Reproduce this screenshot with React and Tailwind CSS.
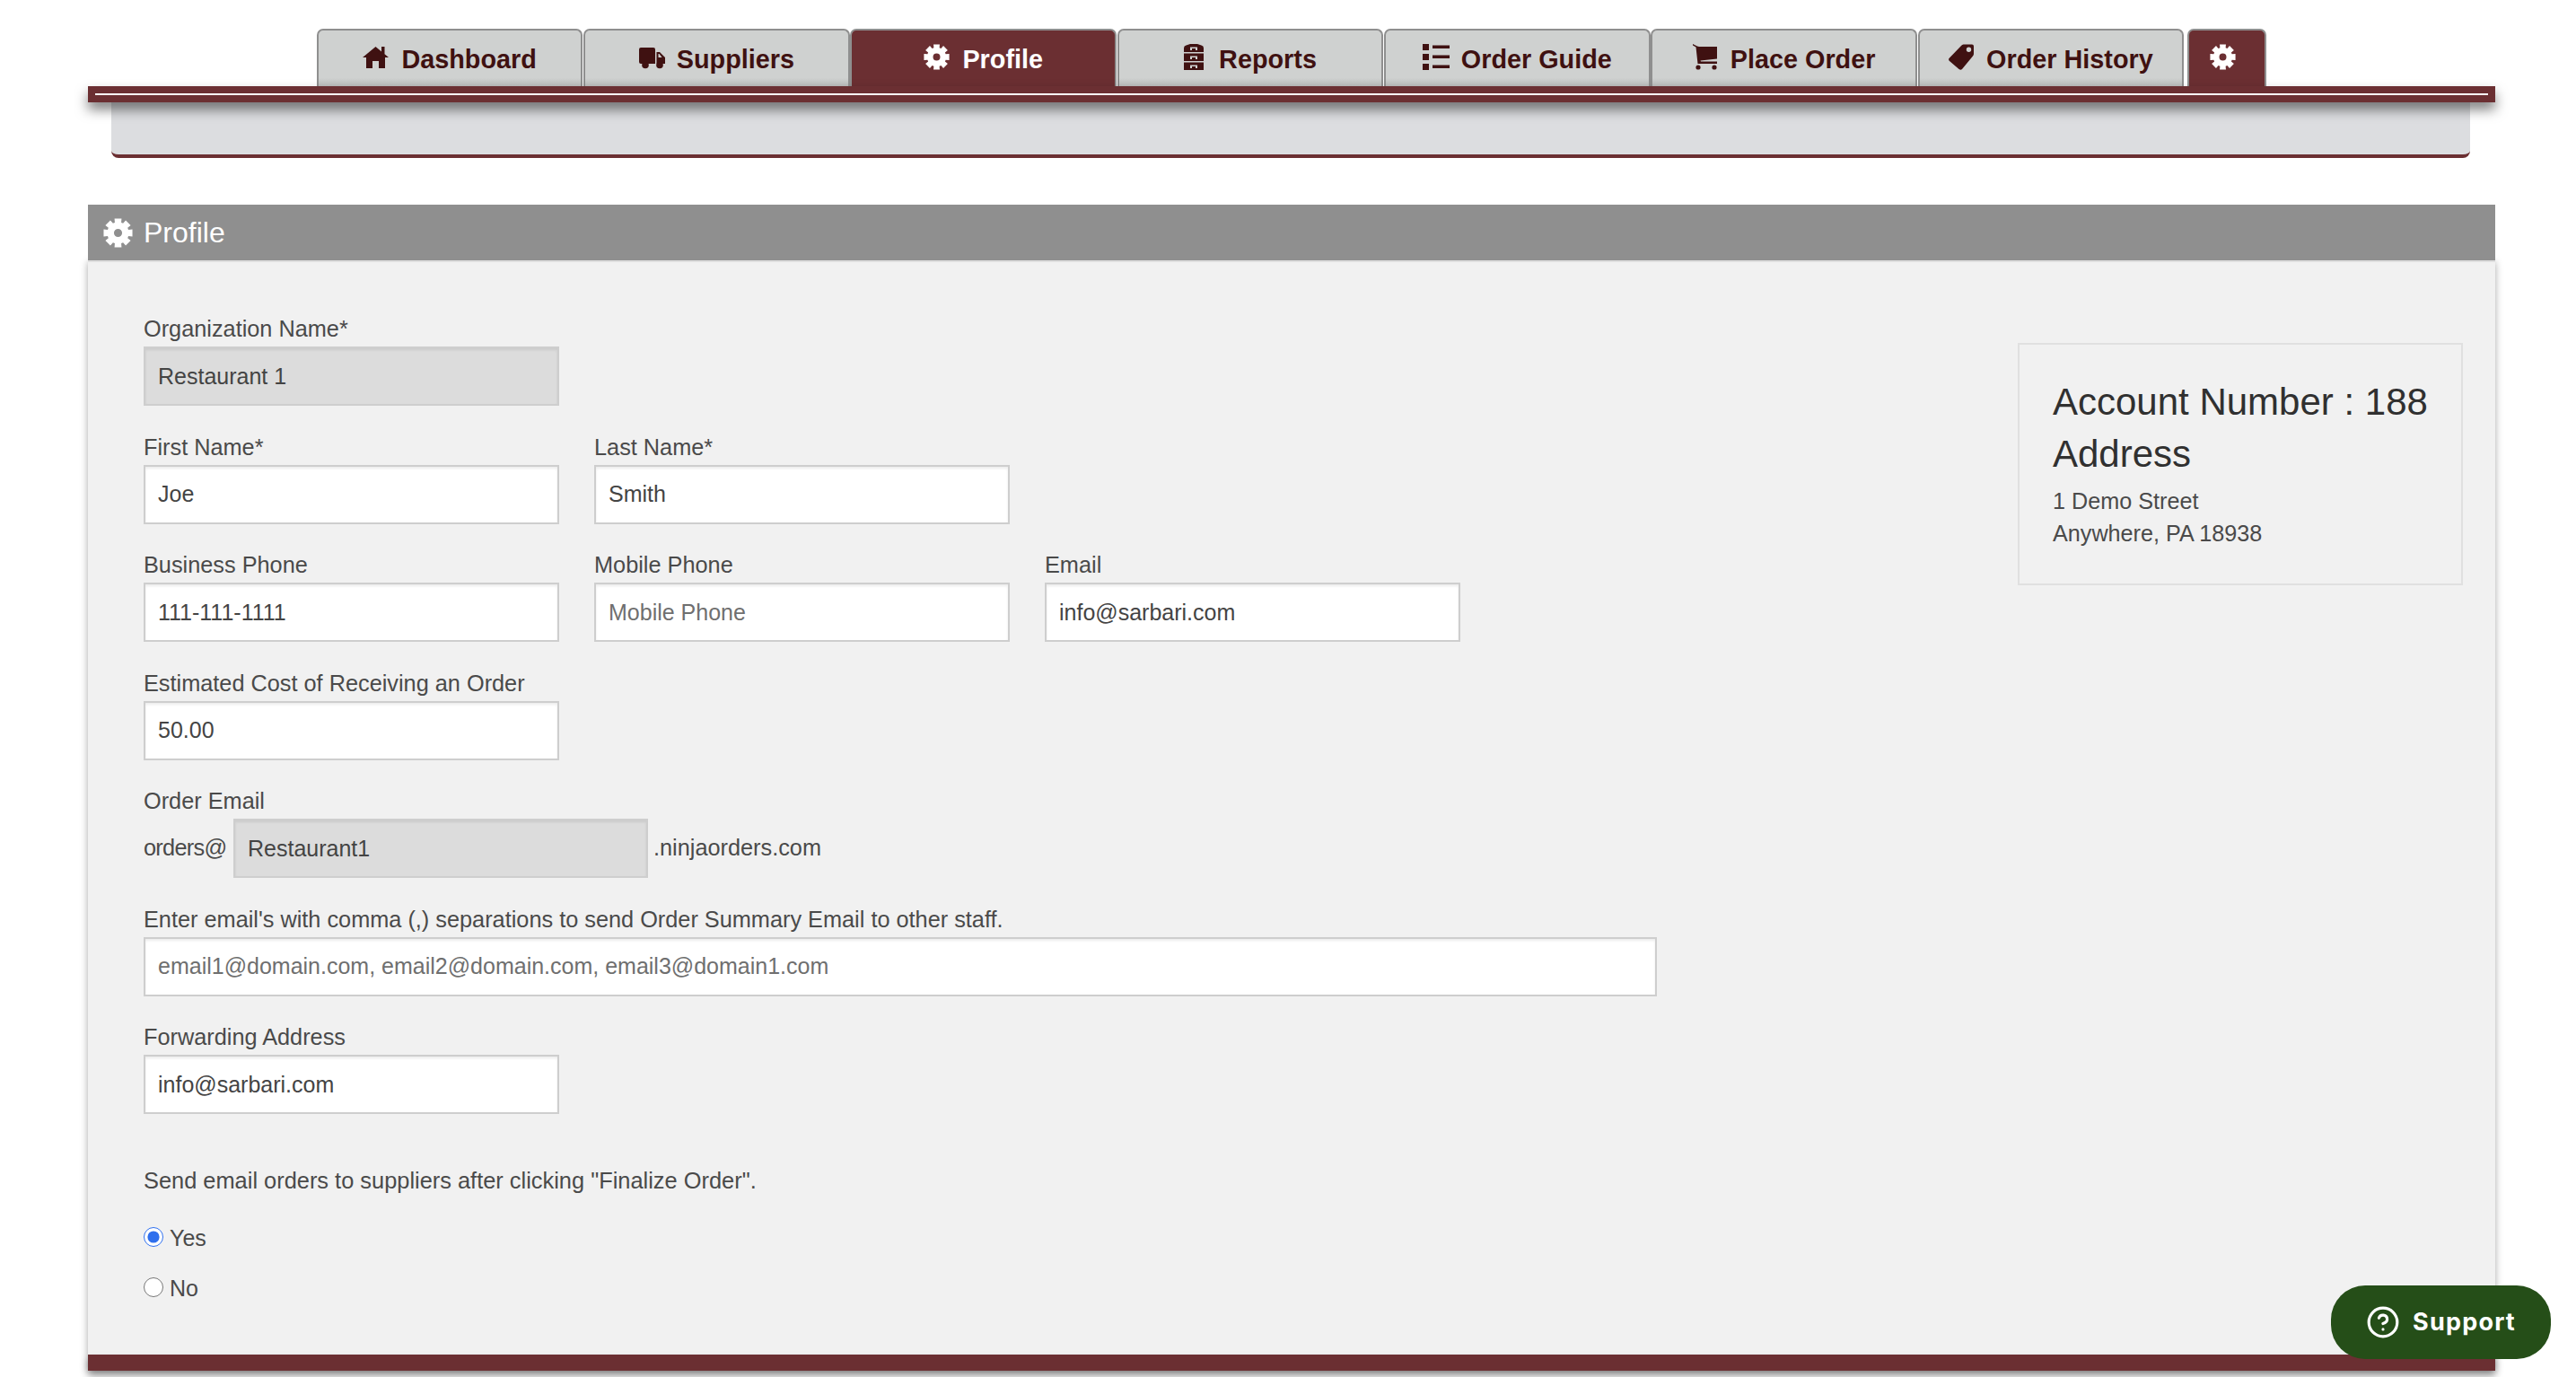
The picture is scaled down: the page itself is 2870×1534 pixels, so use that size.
import React from "react";
import { CircleHelp } from "lucide-react";

const gearPath = (() => {
  const c = 14.5;
  const pts = [];
  for (let i = 0; i < 8; i++) {
    const a = (i * Math.PI) / 4 - Math.PI / 2;
    const seq = [
      [10.6, -0.3],
      [14.5, -0.24],
      [14.5, 0.24],
      [10.6, 0.3],
    ];
    seq.forEach(([r, d]) => {
      pts.push([c + r * Math.cos(a + d), c + r * Math.sin(a + d)]);
    });
  }
  const outer = "M" + pts.map((p) => p[0].toFixed(2) + " " + p[1].toFixed(2)).join("L") + "Z";
  return outer + "M14.5 10.500a4 4 0 1 0 0 8a4 4 0 1 0 0-8Z";
})();

const Gear = ({ className }) => (
  <svg viewBox="0 0 29 29" className={className} fill="currentColor">
    <path fillRule="evenodd" d={gearPath} />
  </svg>
);

const Home = ({ className }) => (
  <svg viewBox="0 0 29 29" className={className} fill="currentColor">
    <path d="M14.5 3L21 8.4V3h3.5v8.3L29 15h-4v12h-7v-8h-7v8H4V15H0Z" />
  </svg>
);

const Truck = ({ className }) => (
  <svg viewBox="0 0 29 29" className={className} fill="currentColor">
    <path fillRule="evenodd" d="M2 4h14a2 2 0 0 1 2 2v16H2a2 2 0 0 1-2-2V6a2 2 0 0 1 2-2ZM19.5 9H23l6 6v7H19.5ZM21.5 11v4h4l-3-4Z" />
    <circle cx="7" cy="23.5" r="3.8" />
    <circle cx="23" cy="23.5" r="3.8" />
  </svg>
);

const Cabinet = ({ className }) => (
  <svg viewBox="0 0 22 29" className={className} fill="currentColor">
    <path fillRule="evenodd" d="M0 9V4.5Q0 2 2.5 1.5L7 0h8l4.500 1.500Q22 2 22 4.500V9ZM7 7h2V5h4v2h2V3.500H7Z" />
    <path fillRule="evenodd" d="M0 10.500h22V19H0ZM7 17h2v-2h4v2h2v-3.500H7Z" />
    <path fillRule="evenodd" d="M0 20.500h22V29H0ZM7 27h2v-2h4v2h2v-3.500H7Z" />
  </svg>
);

const ListIcon = ({ className }) => (
  <svg viewBox="0 0 30 29" className={className} fill="currentColor">
    <rect x="0" y="0" width="7" height="7" />
    <rect x="0" y="11" width="7" height="7" />
    <rect x="0" y="22" width="7" height="7" />
    <rect x="11" y="1.500" width="19" height="3.500" />
    <rect x="11" y="12.500" width="19" height="3.500" />
    <rect x="11" y="23.500" width="19" height="3.500" />
  </svg>
);

const Cart = ({ className }) => (
  <svg viewBox="0 0 27 29" className={className} fill="currentColor">
    <path d="M0 0l5 2.500L7 3h20v13.500L8.500 18.500 9 19.500h18V22H5.500L3.500 3.500 0 1.500Z" />
    <circle cx="6" cy="26" r="2.600" />
    <circle cx="24" cy="26" r="2.600" />
  </svg>
);

const Tag = ({ className }) => (
  <svg viewBox="0 0 28 29" className={className} fill="currentColor">
    <path fillRule="evenodd" d="M16.500 0.500H26a2 2 0 0 1 2 2V11q0 1-1 2.500L15 28q-1.500 1.500-3.500 0L1 19q-1.500-1.500-0.500-3L14 2q1-1.500 2.500-1.500ZM22.500 3.500a2.700 2.700 0 1 0 0 5.400a2.700 2.700 0 1 0 0-5.400Z" />
  </svg>
);

const tabs = [
  { label: "Dashboard", Icon: Home, icon: "w-[29px] h-[29px]", gap: "gap-[14px]" },
  { label: "Suppliers", Icon: Truck, icon: "w-[29px] h-[29px]", gap: "gap-[13px]" },
  { label: "Profile", Icon: Gear, icon: "w-[29px] h-[29px]", gap: "gap-[14px]", active: true },
  { label: "Reports", Icon: Cabinet, icon: "w-[22px] h-[29px]", gap: "gap-[17px]" },
  { label: "Order Guide", Icon: ListIcon, icon: "w-[30px] h-[29px]", gap: "gap-[13px]" },
  { label: "Place Order", Icon: Cart, icon: "w-[27px] h-[29px]", gap: "gap-[15px]" },
  { label: "Order History", Icon: Tag, icon: "w-[28px] h-[29px]", gap: "gap-[14px]" },
];

const inputBase =
  "h-[66px] border-2 border-[#cecece] px-[14px] text-[25px] text-[#444444] outline-none placeholder:text-[#6f6f6f] shadow-[inset_0_2px_3px_rgba(0,0,0,0.08)]";
const inputOn = "bg-white";
const inputOff = "bg-[#dcdcdc]";

const Label = ({ children }) => (
  <div className="h-[36px] text-[25.3px] leading-[32px] text-[#4a4a4a]">{children}</div>
);

const Field = ({ label, value, placeholder, disabled, width = "w-[462.5px]" }) => (
  <div className={width}>
    <Label>{label}</Label>
    <input
      readOnly
      value={value}
      placeholder={placeholder}
      className={`${inputBase} ${disabled ? inputOff : inputOn} w-full`}
    />
  </div>
);

export default function App() {
  return (
    <div className="relative bg-white pb-[8px] font-['Liberation_Sans',Arial,sans-serif]">
      <div className="ml-[98px] w-[2682px] pt-[32px]">
        <nav className="flex justify-center">
          <div className="flex gap-[0.8px]">
            {tabs.map(({ label, Icon, icon, gap, active }) => (
              <a
                key={label}
                className={`flex h-[64px] w-[296.5px] items-center justify-center rounded-t-[7px] border-x-2 border-t-2 border-[#8f8f8f] pb-[3px] ${gap} text-[28.8px] font-bold ${
                  active
                    ? "bg-[#6b2f32] text-white"
                    : "bg-linear-to-b from-[#cfd1d0] via-[#cfd1d0] via-85% to-[#bcbebd] text-[#3f1111]"
                }`}
              >
                <Icon className={icon} />
                <span className="mt-[6px]">{label}</span>
              </a>
            ))}
            <a className="ml-[3.200px] flex h-[64px] w-[88px] items-center justify-center rounded-t-[7px] border-x-2 border-t-2 border-[#8f8f8f] bg-[#6b2f32] pb-[3px] pr-[10px] text-white">
              <Gear className="w-[29px] h-[29px]" />
            </a>
          </div>
        </nav>

        <div className="relative z-10 bg-[#6b2f32] p-[8px] shadow-[0_8px_14px_rgba(0,0,0,0.5)]">
          <div className="h-[2px] bg-white" />
        </div>

        <div className="ml-[26px] mr-[28px] h-[62px] rounded-b-[8px] border-b-4 border-[#6b2f32] bg-[#dcdde0]" />

        <div className="relative z-10 mt-[52px] flex h-[64px] items-center gap-[12px] border-b-2 border-[#dedede] bg-[#8f8f8f] pl-[17px] text-[32px] text-white">
          <Gear className="h-[33px] w-[33px]" />
          <span>Profile</span>
        </div>

        <div className="shadow-[0_0_8px_rgba(0,0,0,0.35)]">
          <div className="flex justify-between bg-[#f1f1f1]">
            <div className="pl-[62px] pt-[58px] pb-[55px]">
              <div className="mb-[29.500px]">
                <Field label="Organization Name*" value="Restaurant 1" disabled />
              </div>
              <div className="mb-[29.500px] flex gap-[39.5px]">
                <Field label="First Name*" value="Joe" />
                <Field label="Last Name*" value="Smith" />
              </div>
              <div className="mb-[29.500px] flex gap-[39.5px]">
                <Field label="Business Phone" value="111-111-1111" />
                <Field label="Mobile Phone" value="" placeholder="Mobile Phone" />
                <Field label="Email" value="info@sarbari.com" />
              </div>
              <div className="mb-[29.500px]">
                <Field label="Estimated Cost of Receiving an Order" value="50.00" />
              </div>
              <div className="mb-[29.500px]">
                <Label>Order Email</Label>
                <div className="flex items-center text-[25.3px] text-[#4a4a4a]">
                  <span className="w-[100px] tracking-[-0.7px]">orders@</span>
                  <input
                    readOnly
                    value="Restaurant1"
                    className={`${inputBase} ${inputOff} w-[462px]`}
                  />
                  <span className="ml-[6px]">.ninjaorders.com</span>
                </div>
              </div>
              <div className="mb-[29.500px]">
                <Field
                  label="Enter email's with comma (,) separations to send Order Summary Email to other staff."
                  value=""
                  placeholder="email1@domain.com, email2@domain.com, email3@domain1.com"
                  width="w-[1686px]"
                />
              </div>
              <Field label="Forwarding Address" value="info@sarbari.com" />

              <div className="mt-[55.500px] text-[25.4px] leading-[36px] text-[#4a4a4a]">
                Send email orders to suppliers after clicking "Finalize Order".
              </div>
              <label className="mt-[29px] flex h-[36px] items-center gap-[7px] text-[25px] text-[#4a4a4a]">
                <input
                  type="radio"
                  name="send"
                  defaultChecked
                  className="m-0 -mt-[4px] h-[22px] w-[22px] accent-[#2f6fed]"
                />
                Yes
              </label>
              <label className="mt-[20px] flex h-[36px] items-center gap-[7px] text-[25px] text-[#4a4a4a]">
                <input type="radio" name="send" className="m-0 -mt-[4px] h-[22px] w-[22px]" />
                No
              </label>
            </div>

            <aside className="mr-[36px] mt-[90px] h-[270px] w-[496px] border-2 border-[#e0e0e0] px-[37px] pt-[35px]">
              <div className="text-[42px] leading-[58px] text-[#303030]">Account Number : 188</div>
              <div className="text-[42px] leading-[58px] text-[#303030]">Address</div>
              <div className="mt-[5px] text-[25.2px] leading-[36px] text-[#4a4a4a]">1 Demo Street</div>
              <div className="text-[25.2px] leading-[36px] text-[#4a4a4a]">Anywhere, PA 18938</div>
            </aside>
          </div>
          <div className="h-[18px] bg-[#6b2f32] shadow-[0_6px_8px_rgba(0,0,0,0.35)]" />
        </div>
      </div>

      <button className="fixed bottom-[20px] right-[28px] flex h-[82px] w-[245px] items-center justify-center gap-[14px] rounded-[38px] bg-[#254e18] font-['Inter',sans-serif] text-[27px] font-bold tracking-[1.2px] text-white">
        <CircleHelp className="h-[38px] w-[38px]" strokeWidth={2} />
        Support
      </button>
    </div>
  );
}
